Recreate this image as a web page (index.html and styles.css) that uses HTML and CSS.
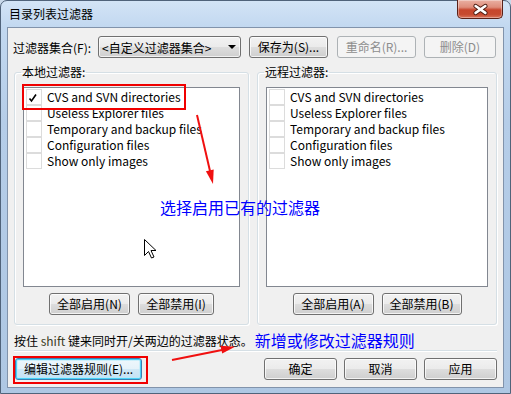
FILE: index.html
```html
<!DOCTYPE html>
<html lang="zh-CN">
<head>
<meta charset="utf-8">
<title>目录列表过滤器</title>
<link rel="stylesheet" href="styles.css">
</head>
<body>
<div class="window">
  <div class="titlebar">
    <span class="title">目录列表过滤器</span>
    <div class="close">
      <svg width="46" height="19" viewBox="0 0 46 19">
        <path d="M19 7 L29 14 M29 7 L19 14" stroke="#4a1a10" stroke-width="4.5" stroke-linecap="round"/>
        <path d="M19 7 L29 14 M29 7 L19 14" stroke="#ffffff" stroke-width="2.6" stroke-linecap="round"/>
      </svg>
    </div>
  </div>
  <div class="client">
    <div class="toprow">
      <span class="lbl">过滤器集合(F):</span>
      <div class="combo">
        <span>&lt;自定义过滤器集合&gt;</span>
        <svg class="caret" width="8" height="4" viewBox="0 0 8 4"><path d="M0 0H8L4 4Z" fill="#000"/></svg>
      </div>
      <button class="btn btn-save">保存为(S)...</button>
      <button class="btn btn-rename" disabled>重命名(R)...</button>
      <button class="btn btn-del" disabled>删除(D)</button>
    </div>

    <div class="groups">
      <fieldset class="group group-local">
        <legend>本地过滤器:</legend>
        <div class="list">
          <div class="item"><span class="cb"><svg width="16" height="16" viewBox="0 0 16 16"><path d="M3.5 9.5 L5.5 12 L10 5.5" fill="none" stroke="#000" stroke-width="1.6"/></svg></span>CVS and SVN directories</div>
          <div class="item"><span class="cb"></span>Useless Explorer files</div>
          <div class="item"><span class="cb"></span>Temporary and backup files</div>
          <div class="item"><span class="cb"></span>Configuration files</div>
          <div class="item"><span class="cb"></span>Show only images</div>
        </div>
        <div class="gbuttons">
          <button class="btn w81">全部启用(N)</button>
          <button class="btn w76">全部禁用(I)</button>
        </div>
      </fieldset>
      <fieldset class="group group-remote">
        <legend>远程过滤器:</legend>
        <div class="list">
          <div class="item"><span class="cb"></span>CVS and SVN directories</div>
          <div class="item"><span class="cb"></span>Useless Explorer files</div>
          <div class="item"><span class="cb"></span>Temporary and backup files</div>
          <div class="item"><span class="cb"></span>Configuration files</div>
          <div class="item"><span class="cb"></span>Show only images</div>
        </div>
        <div class="gbuttons">
          <button class="btn w81">全部启用(A)</button>
          <button class="btn w80">全部禁用(B)</button>
        </div>
      </fieldset>
    </div>

    <div class="hint">按住 <span class="kw">shift</span> 键来同时开/关两边的过滤器状态。<span class="note note-inline">新增或修改过滤器规则</span></div>
    <div class="sep"></div>

    <div class="bottomrow">
      <button class="btn btn-edit">编辑过滤器规则(E)...</button>
      <div class="spacer"></div>
      <button class="btn w73">确定</button>
      <button class="btn w73">取消</button>
      <button class="btn w73">应用</button>
    </div>
  </div>

  <div class="note note-float">选择启用已有的过滤器</div>
  <div class="redbox redbox-item"></div>
  <div class="redbox redbox-edit"></div>
  <svg class="arrows" width="511" height="394" viewBox="0 0 511 394">
    <line x1="197" y1="115" x2="210" y2="171" stroke="#f01010" stroke-width="2"/>
    <path d="M213 184 L205.9 171.3 L213.7 169.5 Z" fill="#f01010"/>
    <line x1="172" y1="360" x2="222" y2="350" stroke="#f01010" stroke-width="2"/>
    <path d="M235 346.7 L222.2 353.6 L220.4 345.8 Z" fill="#f01010"/>
    <path class="cursor" d="M144.5 239.5 L144.5 255.5 L148.5 251.5 L151.5 258 L154 257 L151 250.5 L156 250.5 Z" fill="#fff" stroke="#000" stroke-width="1"/>
  </svg>
</div>
</body>
</html>
```

FILE: styles.css
```css
* { box-sizing: border-box; }
html, body { margin: 0; padding: 0; }
body {
  width: 511px;
  height: 394px;
  overflow: hidden;
  background: #c9d9ea;
  font-family: "Noto Sans CJK SC", "Noto Sans", sans-serif;
  font-size: 12px;
  color: #000;
}
.window {
  position: relative;
  width: 511px;
  height: 394px;
  display: flex;
  flex-direction: column;
  padding: 0 7px 6px 7px;
  border: 1px solid #50637a;
  border-radius: 7px 7px 0 0;
  background: linear-gradient(180deg, #d3e4f6 0px, #c2d8f0 26px, #b5cde8 120px, #aec7e3 394px);
}
.titlebar {
  height: 27px;
  display: flex;
  align-items: flex-start;
  padding-left: 1px;
}
.title {
  margin-top: 4px;
  line-height: 18px;
  font-size: 12px;
  color: #000;
}
.close {
  margin-left: auto;
  margin-top: -1px;
  width: 46px;
  height: 19px;
  border: 1px solid #5a2118;
  border-top: none;
  border-radius: 0 0 5px 5px;
  background: linear-gradient(180deg, #eab0a2 0%, #de8d7b 40%, #c7462d 55%, #c64a30 80%, #d9745b 100%);
  box-shadow: inset 0 0 0 1px rgba(255,255,255,0.35);
  display: flex;
}
.close svg { display: block; margin: -1px 0 0 -1px; }
.client {
  flex: 1;
  background: #f0f0f0;
  box-shadow: 0 0 0 1px #8193ab;
  display: flex;
  flex-direction: column;
  padding: 8px 6px 0 6px;
}
.toprow {
  display: flex;
  align-items: center;
  height: 22px;
}
.lbl {
  width: 85px;
  margin-left: -1px;
}
.combo {
  width: 143px;
  height: 22px;
  border: 1px solid #707070;
  border-radius: 3px;
  background: linear-gradient(180deg, #f2f2f2 0%, #ebebeb 50%, #dddddd 51%, #cfcfcf 100%);
  box-shadow: inset 0 0 0 1px rgba(255,255,255,0.7);
  display: flex;
  align-items: center;
  padding: 0 0 0 3px;
  margin-right: 8px;
}
.combo .caret { margin-left: auto; margin-right: 4px; }
.btn {
  font-family: inherit;
  font-size: 12px;
  color: #000;
  height: 22px;
  padding: 0;
  border: 1px solid #707070;
  border-radius: 3px;
  background: linear-gradient(180deg, #f2f2f2 0%, #ebebeb 50%, #dddddd 51%, #cfcfcf 100%);
  box-shadow: inset 0 0 0 1px rgba(255,255,255,0.75);
  line-height: 18px;
  text-align: center;
}
.btn:disabled {
  color: #8d8d8d;
  border-color: #adb2b5;
  background: #f4f4f4;
  box-shadow: none;
}
.btn-save { width: 79px; margin-right: 9px; }
.btn-rename { width: 79px; margin-right: 8px; }
.btn-del { width: 72px; }
.w81 { width: 81px; }
.w80 { width: 80px; }
.w76 { width: 76px; }
.w73 { width: 73px; }

.groups {
  display: flex;
  gap: 8px;
  margin-top: 6px;
}
.group {
  margin: 0;
  padding: 7px 8px 9px 8px;
  border: 1px solid #d5dfe5;
  border-radius: 3px;
  box-shadow: inset 1px 1px 0 #fff, 1px 1px 0 #fff;
  min-width: 0;
}
.group-local { width: 235px; }
.group-remote { width: 240px; }
.group legend {
  padding: 0 1px;
  margin-left: -2px;
  line-height: 16px;
}
.list {
  height: 200px;
  background: #fff;
  border: 1px solid #828790;
  padding: 1px 0 0 2px;
}
.item {
  height: 16px;
  display: flex;
  align-items: center;
  line-height: 16px;
  white-space: nowrap;
}
.cb {
  width: 16px;
  height: 16px;
  border: 1px solid #dcdcdc;
  margin-right: 5px;
  flex: none;
  display: flex;
}
.cb svg { display: block; margin: -1px; }
.gbuttons {
  display: flex;
  justify-content: center;
  gap: 8px;
  margin-top: 6px;
}
.hint {
  display: flex;
  align-items: center;
  height: 16px;
  margin-top: 7px;
  white-space: pre;
}
.kw { color: #3b3b1e; }
.note {
  color: #0000ff;
  font-size: 16px;
  line-height: 16px;
}
.note-inline { margin-left: 2px; }
.sep {
  height: 2px;
  margin-top: 2px;
  border-top: 1px solid #d5dfe5;
  border-bottom: 1px solid #fff;
}
.bottomrow {
  display: flex;
  align-items: center;
  gap: 7px;
  margin-top: 6px;
}
.spacer { flex: 1; }
.btn-edit {
  width: 127px;
  margin-left: 1px;
  border-color: #3c7fb1;
  box-shadow: inset 0 0 0 1px #48d1f8, inset 0 0 0 2px rgba(180,235,252,0.6);
  background: linear-gradient(180deg, #eef7fc 0%, #e5f2fa 50%, #d0e8f6 51%, #c4e2f4 100%);
}
.note-float {
  position: absolute;
  left: 159px;
  top: 198px;
}
.redbox {
  position: absolute;
  border: 2px solid #f00000;
}
.redbox-item { left: 21px; top: 83px; width: 164px; height: 26px; }
.redbox-edit { left: 12px; top: 355px; width: 135px; height: 28px; }
.arrows {
  position: absolute;
  left: -1px;
  top: -1px;
  pointer-events: none;
}
```
